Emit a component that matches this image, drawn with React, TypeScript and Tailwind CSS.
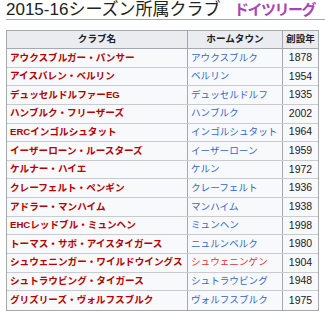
import React from "react";

const rows: [string, string, string, boolean?][] = [
  ["アウクスブルガー・パンサー", "アウクスブルク", "1878"],
  ["アイスバレン・ベルリン", "ベルリン", "1954"],
  ["デュッセルドルファーEG", "デュッセルドルフ", "1935"],
  ["ハンブルク・フリーザーズ", "ハンブルク", "2002"],
  ["ERCインゴルシュタット", "インゴルシュタット", "1964"],
  ["イーザーローン・ルースターズ", "イーザーローン", "1959"],
  ["ケルナー・ハイエ", "ケルン", "1972"],
  ["クレーフェルト・ペンギン", "クレーフェルト", "1936"],
  ["アドラー・マンハイム", "マンハイム", "1938"],
  ["EHCレッドブル・ミュンヘン", "ミュンヘン", "1998"],
  ["トーマス・サボ・アイスタイガース", "ニュルンベルク", "1980"],
  ["シュウェニンガー・ワイルドウイングス", "シュウェニンゲン", "1904", true],
  ["シュトラウビング・タイガース", "シュトラウビング", "1948"],
  ["グリズリーズ・ヴォルフスブルク", "ヴォルフスブルク", "1975"],
];

const font = { fontFamily: '"Liberation Sans", "Noto Sans CJK JP", sans-serif' };

export default function App() {
  return (
    <div className="w-[325px] h-[315px] bg-white overflow-hidden" style={font}>
      <div className="pl-[6px]">
        <div className="flex items-end justify-between h-[20px] border-b border-[#a2a9b1] pr-[10px]">
          <span className="text-[17px] leading-[19px] text-[#202122] whitespace-nowrap">
            2015-16シーズン所属クラブ
          </span>
          <span className="text-[15px] leading-[19px] tracking-[-1.5px] font-bold text-[#a646b4] whitespace-nowrap">
            ドイツリーグ
          </span>
        </div>
        <div className="mt-[10px] w-[313px] border border-[#a2a9b1] bg-[#f8f9fa] text-[9.6px]">
          <div className="flex h-[18px] bg-[#eaecf0] border-b border-[#a2a9b1] font-bold text-[#202122]">
            <div className="w-[181px] shrink-0 border-r border-[#a2a9b1] flex items-center justify-center">クラブ名</div>
            <div className="w-[95px] shrink-0 border-r border-[#a2a9b1] flex items-center justify-center">ホームタウン</div>
            <div className="flex-1 flex items-center justify-center">創設年</div>
          </div>
          {rows.map(([club, town, year, red], i) => (
            <div
              key={i}
              className={`flex h-[18.64px] ${i < rows.length - 1 ? "border-b border-[#c8ccd1]" : ""}`}
            >
              <div className="w-[181px] shrink-0 border-r border-[#a2a9b1] flex items-center pl-[3px] font-bold text-[#b40000] whitespace-nowrap overflow-hidden">
                {club}
              </div>
              <div
                className={`w-[95px] shrink-0 border-r border-[#a2a9b1] flex items-center pl-[3px] whitespace-nowrap overflow-hidden ${
                  red ? "text-[#dd3333]" : "text-[#3366cc]"
                }`}
              >
                {town}
              </div>
              <div className="flex-1 flex items-center justify-center text-[10.5px] text-[#202122]">{year}</div>
            </div>
          ))}
        </div>
      </div>
    </div>
  );
}
